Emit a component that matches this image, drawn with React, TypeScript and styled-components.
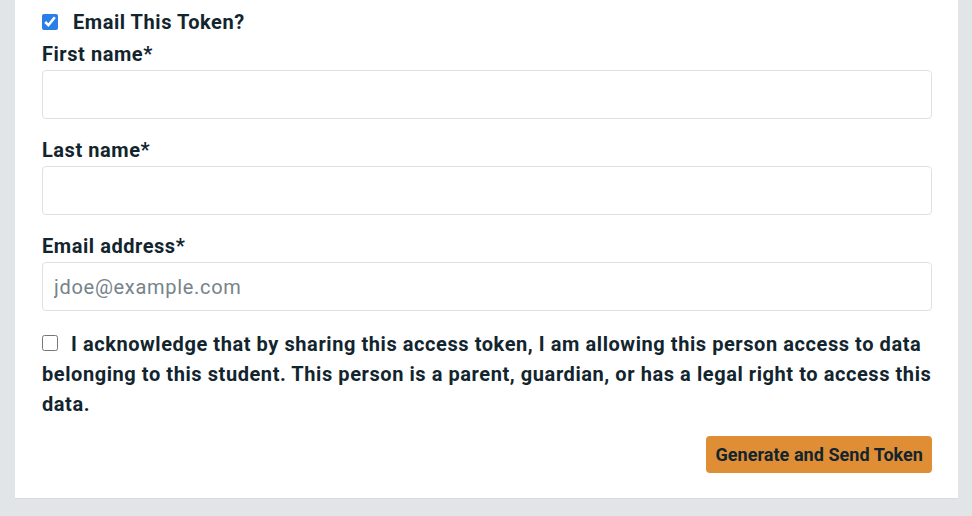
import React from "react";
import styled, { createGlobalStyle } from "styled-components";

const Global = createGlobalStyle`
  html, body { margin: 0; padding: 0; background: #e2e5e8; }
  body { font-family: Roboto, "Noto Sans", Arial, sans-serif; color: #12252e; }
  * { box-sizing: border-box; }
`;

const Page = styled.div`
  padding: 0 14px 18px 15px;
  width: 972px;
  height: 516px;
  overflow: hidden;
`;

const Card = styled.form`
  background: #ffffff;
  padding: 10px 26px 25px 27px;
  border-bottom: 1px solid #d6dadd;
  display: flex;
  flex-direction: column;
`;

const CheckRow = styled.label`
  display: flex;
  align-items: center;
  font-size: 20px;
  line-height: 24px;
  font-weight: 700;
  letter-spacing: 0.55px;
  margin-bottom: 8px;
`;

const Check = styled.input.attrs({ type: "checkbox" })`
  width: 16px;
  height: 16px;
  margin: 0 15px 0 0;
  flex: none;
  accent-color: #2a7ee8;
`;

const Field = styled.div`
  display: flex;
  flex-direction: column;
  margin-bottom: 19px;
`;

const Label = styled.label`
  font-size: 20px;
  line-height: 24px;
  font-weight: 700;
  letter-spacing: 0.55px;
  margin-bottom: 4px;
`;

const Input = styled.input`
  height: 49px;
  width: 100%;
  border: 1px solid #dee2e6;
  border-radius: 4px;
  padding: 0 11px;
  font-family: Roboto, "Noto Sans", Arial, sans-serif;
  font-size: 20px;
  letter-spacing: 0.7px;
  color: #12252e;
  background: #fff;
  &::placeholder { color: #76838a; }
`;

const Ack = styled.label`
  display: block;
  font-size: 20px;
  line-height: 30px;
  font-weight: 700;
  letter-spacing: 0.57px;
  margin-top: -1px;
  margin-bottom: 17px;
`;

const AckCheck = styled(Check)`
  margin: 0 13px 0 0;
  vertical-align: 0;
`;

const Actions = styled.div`
  display: flex;
  justify-content: flex-end;
`;

const Button = styled.button`
  height: 37px;
  padding: 0 9px;
  border: none;
  border-radius: 4px;
  background: #e08e35;
  color: #12252e;
  font-family: Roboto, "Noto Sans", Arial, sans-serif;
  font-size: 18px;
  font-weight: 700;
  letter-spacing: 0.05px;
  cursor: pointer;
`;

export default function App() {
  return (
    <>
      <Global />
      <Page>
        <Card onSubmit={(e) => e.preventDefault()}>
          <CheckRow>
            <Check defaultChecked />
            Email This Token?
          </CheckRow>
          <Field>
            <Label>First name*</Label>
            <Input type="text" />
          </Field>
          <Field>
            <Label>Last name*</Label>
            <Input type="text" />
          </Field>
          <Field>
            <Label>Email address*</Label>
            <Input type="email" placeholder="jdoe@example.com" />
          </Field>
          <Ack>
            <AckCheck />
            I acknowledge that by sharing this access token, I am allowing this person access to data belonging to this student. This person is a parent, guardian, or has a legal right to access this data.
          </Ack>
          <Actions>
            <Button type="submit">Generate and Send Token</Button>
          </Actions>
        </Card>
      </Page>
    </>
  );
}
